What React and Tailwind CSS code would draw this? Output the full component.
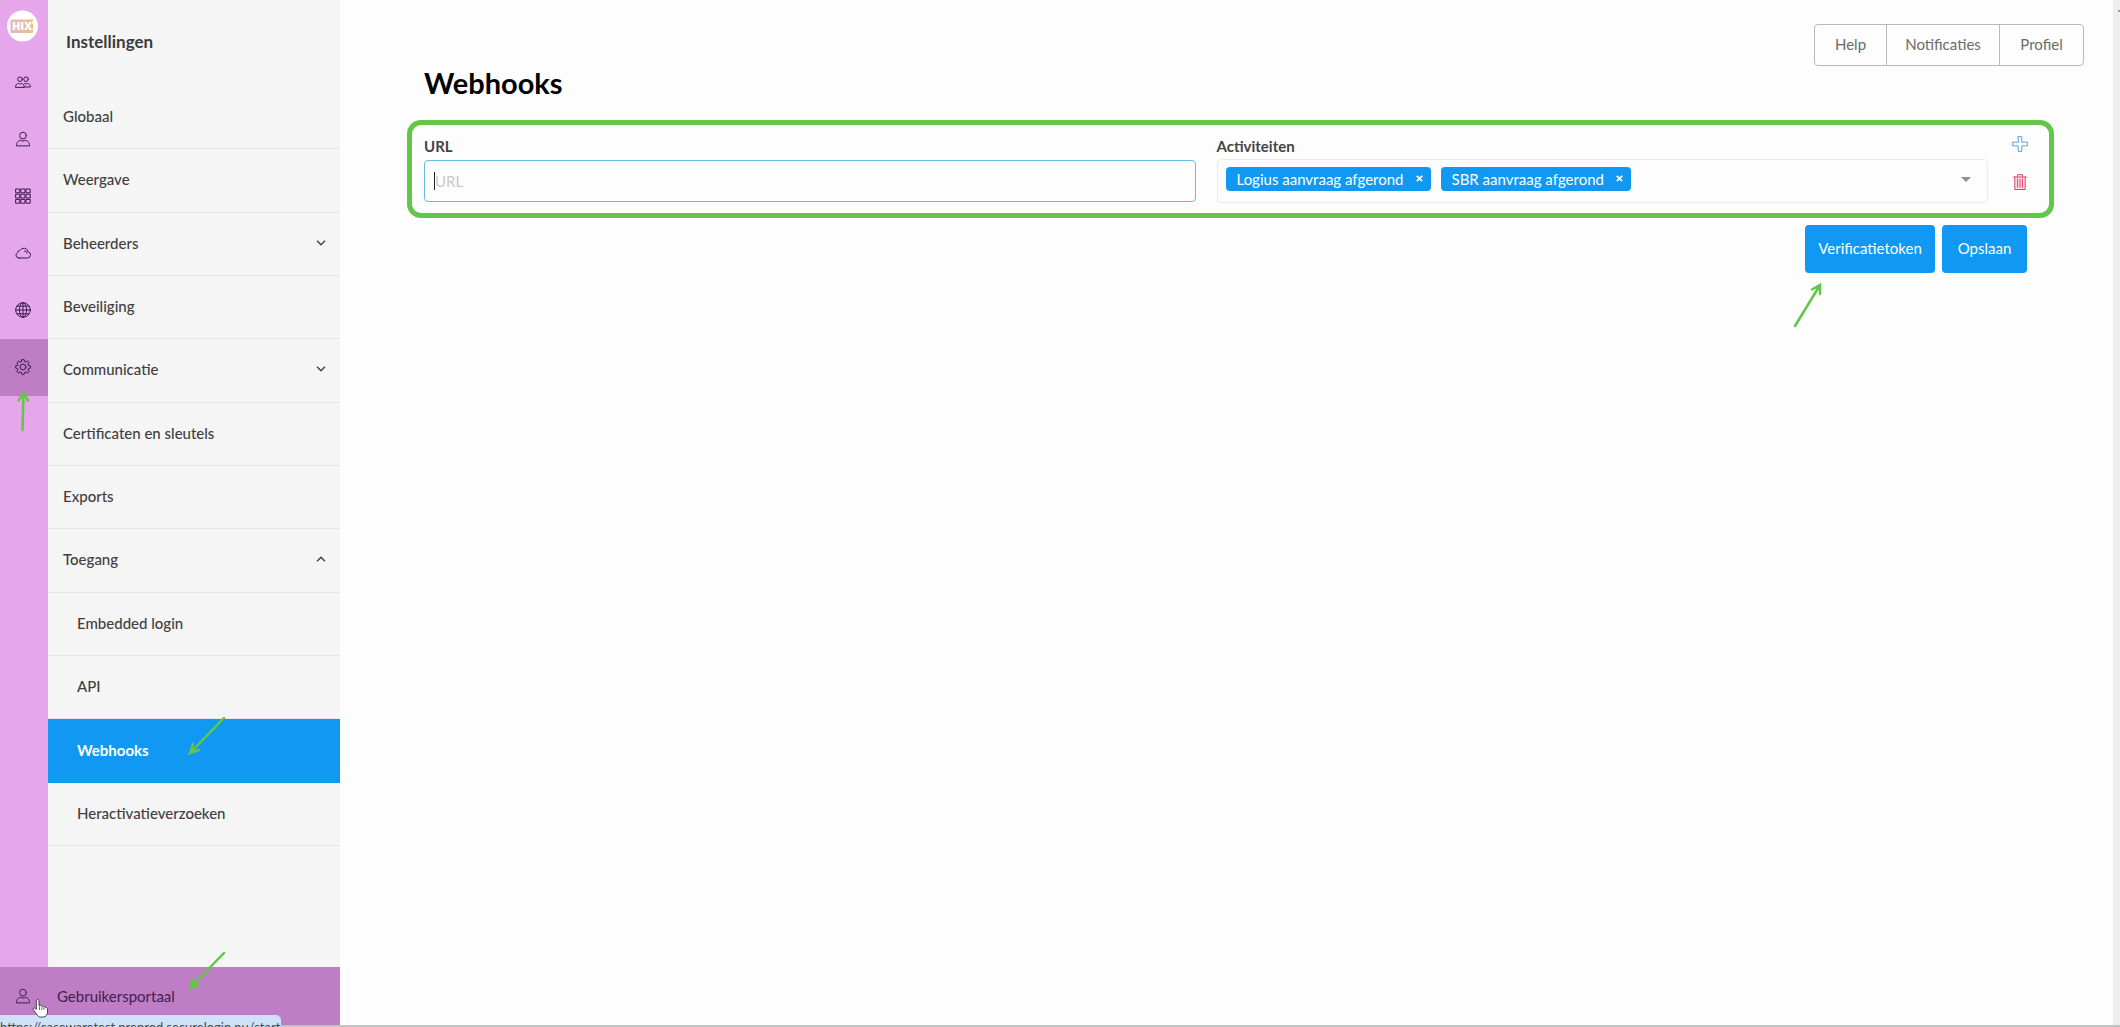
import { useState } from "react";

const menuItems = [
  { label: "Globaal" },
  { label: "Weergave" },
  { label: "Beheerders", toggle: "down" },
  { label: "Beveiliging" },
  { label: "Communicatie", toggle: "down" },
  { label: "Certificaten en sleutels" },
  { label: "Exports" },
  { label: "Toegang", toggle: "up" },
  { label: "Embedded login", sub: true },
  { label: "API", sub: true },
  { label: "Webhooks", sub: true, active: true },
  { label: "Heractivatieverzoeken", sub: true },
];

// All rail icons share a 16px box with thin strokes
function Icon({ children, className = "" }) {
  return (
    <svg
      className={`w-4 h-4 shrink-0 ${className}`}
      viewBox="0 0 16 16"
      fill="none"
      stroke="currentColor"
      strokeWidth="1"
      strokeLinejoin="round"
      strokeLinecap="round"
      aria-hidden="true"
    >
      {children}
    </svg>
  );
}

function UsersIcon() {
  return (
    <Icon>
      <circle cx="5" cy="5.2" r="2.3" />
      <circle cx="11" cy="5.2" r="2.3" />
      <path d="M.6 13c0-2.6 1.2-3.3 3-3.5.8.6 2.1.6 2.9 0 1.7.2 2.7 1 2.7 3.5z" />
      <path d="M9.6 9.5c.9.5 2 .5 2.8 0 1.9.2 3 1 3 3.5H9.2" />
    </Icon>
  );
}

function UserIcon() {
  return (
    <Icon>
      <circle cx="8" cy="4.6" r="3.4" />
      <path d="M1.5 14.5c0-3.6 1.8-4.7 4.3-5.1 1.3.8 3.1.8 4.4 0 2.5.4 4.3 1.5 4.3 5.1z" />
    </Icon>
  );
}

function GridIcon() {
  const cells = [1, 6.2, 11.4];
  return (
    <Icon>
      {cells.map((y) =>
        cells.map((x) => <rect key={`${x}-${y}`} x={x} y={y} width="3.8" height="3.8" />)
      )}
    </Icon>
  );
}

function CloudIcon() {
  return (
    <Icon>
      <path d="M4 13h8.300a3.100 3.100 0 0 0 .9-6.100A4.500 4.500 0 0 0 4.800 5.600 2.200 2.200 0 0 0 2.500 7.900 2.700 2.700 0 0 0 4 13z" />
      <path d="M9.500 6.200c1.600-.3 2.500.7 2.500 2" />
    </Icon>
  );
}

function GlobeIcon() {
  return (
    <Icon>
      <circle cx="8" cy="8" r="7.3" />
      <ellipse cx="8" cy="8" rx="3.6" ry="7.3" />
      <path d="M.7 8h14.6M8 .7v14.6M1.9 4.2h12.2M1.9 11.8h12.2" />
    </Icon>
  );
}

function GearIcon() {
  return (
    <Icon>
      <path d="M6.8.7h2.400l.4 1.900 1.200.5 1.600-1.100 1.700 1.700-1.100 1.600.5 1.200 1.800.3v2.400l-1.800.4-.5 1.200 1.100 1.600-1.700 1.700-1.600-1.100-1.200.5-.4 1.800H6.800l-.4-1.800-1.200-.5-1.600 1.100-1.700-1.700L3 10.800l-.5-1.200-1.800-.4V6.800l1.800-.3L3 5.300 1.900 3.700 3.600 2l1.600 1.100 1.200-.5z" />
      <circle cx="8" cy="8" r="2.9" />
    </Icon>
  );
}

function Chevron({ up }) {
  return (
    <svg className="w-[10px] h-[6px]" viewBox="0 0 10 6" fill="none" stroke="#444" strokeWidth="1.5" aria-hidden="true">
      <path d={up ? "M1 5.3l4-4 4 4" : "M1 .7l4 4 4-4"} />
    </svg>
  );
}

function Logo() {
  return (
    <svg className="w-8 h-8" viewBox="0 0 32 32" role="img" aria-label="HIX">
      <defs>
        <linearGradient id="hix" x1="0" x2="1">
          <stop offset="0" stopColor="#e6b5c4" />
          <stop offset="1" stopColor="#e8c48c" />
        </linearGradient>
      </defs>
      <circle cx="15.5" cy="16" r="15.5" fill="#fff" />
      <path d="M4.500 9.500h22l-1.500 3 1.500 3.500-1 3.500 1 2-1 1.500H3.500V10.500z" fill="url(#hix)" />
      <text x="15" y="20" textAnchor="middle" fontFamily="Open Sans, sans-serif" fontWeight="800" fontSize="11" fill="#fff">
        HIX
      </text>
    </svg>
  );
}

const railItems = [
  { name: "Groepen", icon: UsersIcon },
  { name: "Gebruikers", icon: UserIcon },
  { name: "Applicaties", icon: GridIcon },
  { name: "Cloud", icon: CloudIcon },
  { name: "Domeinen", icon: GlobeIcon },
  { name: "Instellingen", icon: GearIcon, active: true },
];

function Rail() {
  return (
    <nav className="w-12 shrink-0 bg-[#e6a6ec] text-[#3d1a4a]" aria-label="Hoofdmenu">
      <a href="#" className="flex h-[54px] pl-[7px] pt-[10px]">
        <Logo />
      </a>
      {railItems.map(({ name, icon: ItemIcon, active }) => (
        <a
          key={name}
          href="#"
          aria-label={name}
          className={`flex items-center h-[57px] pl-[15px] pb-[2px] ${active ? "bg-[#be7dc5]" : ""}`}
        >
          <ItemIcon />
        </a>
      ))}
    </nav>
  );
}

function SettingsMenu() {
  return (
    <nav className="flex-1 bg-[#f5f5f5]" aria-label="Instellingen">
      <h2 className="h-[86px] pl-[18px] pt-[30px] text-[17px] leading-6 font-bold text-[#3c3c3c]">Instellingen</h2>
      <ul className="grid auto-rows-fr h-[760px]">
        {menuItems.map((item) => (
          <li key={item.label} className={item.active ? "bg-[#1098f2]" : "border-b border-[#e6e6e6]"}>
            <a
              href="#"
              className={`flex items-center justify-between h-full pr-[14px] pb-[2px] text-[15px] leading-5 ${
                item.sub ? "pl-[29px]" : "pl-[15px]"
              } ${item.active ? "text-white font-bold" : "text-[#3f3f3f] font-medium"}`}
            >
              {item.label}
              {item.toggle && <Chevron up={item.toggle === "up"} />}
            </a>
          </li>
        ))}
      </ul>
    </nav>
  );
}

function Arrow({ className, d, box }) {
  return (
    <svg
      className={`absolute pointer-events-none ${className}`}
      viewBox={box}
      fill="none"
      stroke="#62c646"
      strokeWidth="2.5"
      strokeLinecap="round"
      aria-hidden="true"
    >
      <path d={d} />
    </svg>
  );
}

function Chip({ label, onRemove }) {
  return (
    <span className="flex items-center h-[24px] pl-[11px] pb-px rounded-[4px] bg-[#1098f2] text-white text-[15px] leading-5">
      {label}
      <button type="button" onClick={onRemove} aria-label={`Verwijder ${label}`} className="flex ml-[12px] mr-[8px]">
        <svg className="w-[7px] h-[7px]" viewBox="0 0 7 7" stroke="#fff" strokeWidth="1.7" aria-hidden="true">
          <path d="M.8.8l5.400 5.400M6.200.8L.8 6.200" />
        </svg>
      </button>
    </span>
  );
}

function WebhookRow() {
  const [activities, setActivities] = useState(["Logius aanvraag afgerond", "SBR aanvraag afgerond"]);

  return (
    <section className="flex h-[98px] mt-[20px] pl-[12px] pr-[21px] pt-[11px] border-[5px] border-[#62c646] rounded-[14px]">
      <div className="flex-1 relative">
        <label htmlFor="url" className="block h-[24px] text-[15px] leading-5 font-bold text-[#444]">
          URL
        </label>
        <input
          id="url"
          type="text"
          placeholder="URL"
          className="block w-full h-[42px] px-[10px] border border-[#63bfe0] rounded-[4px] bg-transparent text-[15px] leading-5 placeholder:text-[#c9c9c9] outline-none"
        />
        {/* text cursor */}
        <span className="absolute left-[10px] top-[36px] w-px h-[18px] bg-[#222]" />
      </div>
      <div className="flex-1 ml-[21px]">
        <label htmlFor="activities" className="block h-[23px] text-[15px] leading-5 font-bold text-[#444]">
          Activiteiten
        </label>
        <div className="flex items-start gap-[10px] h-[44px] pl-[8px] pt-[7px] pr-[16px] border border-[#ebebeb] rounded-[4px]">
          {activities.map((a) => (
            <Chip key={a} label={a} onRemove={() => setActivities(activities.filter((b) => b !== a))} />
          ))}
          <input id="activities" type="text" role="combobox" aria-expanded="false" className="flex-1 min-w-0 h-[23px] outline-none" />
          <button type="button" aria-label="Toon opties" className="flex pt-[10px]">
            <svg className="w-[10px] h-[5px]" viewBox="0 0 10 5" fill="#909090" aria-hidden="true">
              <path d="M0 0h10L5 5z" />
            </svg>
          </button>
        </div>
      </div>
      <div className="flex flex-col gap-[22px] ml-[24px]">
        <button type="button" aria-label="Toevoegen" className="flex text-[#5f9fdf]">
          <Icon>
            <path d="M6.200.6h3.600v5.600h5.600v3.600H9.800v5.600H6.200V9.800H.6V6.200h5.600z" />
          </Icon>
        </button>
        <button type="button" aria-label="Verwijderen" className="flex text-[#e0446a]">
          <Icon>
            <path d="M2.800 3v12.500h10.400V3" fill="#fbdde5" />
            <path d="M1.500 3h13M5.500 3V.7h5V3" />
            <path d="M5.600 5.200v8M8 5.200v8M10.400 5.200v8" />
          </Icon>
        </button>
      </div>
    </section>
  );
}

function TopButtons() {
  return (
    <div className="flex self-end h-[42px] mr-[29px] border border-[#b9b9b9] rounded-[4px] divide-x divide-[#b9b9b9] text-[15px] leading-5 text-[#6b6b6b]">
      <button type="button" className="w-[72px] pb-[2px]">Help</button>
      <button type="button" className="w-[113px] pb-[2px]">Notificaties</button>
      <button type="button" className="w-[83px] pb-[2px]">Profiel</button>
    </div>
  );
}

export default function App() {
  return (
    <div className="relative flex flex-col min-h-screen bg-[#fdfdfd] font-['Lato',sans-serif]">
      <div className="flex flex-1">
        <aside className="relative flex flex-col w-[340px] shrink-0">
          <div className="flex flex-1">
            <Rail />
            <SettingsMenu />
          </div>
          <a href="#" className="flex items-center h-[58px] pl-[15px] pb-px bg-[#be7dc5] text-[#43204f] text-[15px] leading-5">
            <UserIcon />
            <span className="pl-[26px]">Gebruikersportaal</span>
          </a>
          <Arrow className="left-[12px] top-[388px] w-[22px] h-[46px]" box="0 0 22 46" d="M10.500 42L11.500 5M6.500 12.500L11.500 5l4.500 7.500" />
          <Arrow className="left-[185px] top-[714px] w-[44px] h-[44px]" box="0 0 44 44" d="M39 4L5 39M8 30L5 39l9-3" />
          <Arrow className="left-[185px] top-[949px] w-[44px] h-[44px]" box="0 0 44 44" d="M39 4L5 39M8 30L5 39l9-3" />
        </aside>

        <main className="relative flex-1 flex flex-col pt-[24px]">
          <TopButtons />
          <div className="pl-[67px] pr-[59px]">
            <h1 className="pl-[17px] text-[29px] leading-[34px] font-bold text-black">Webhooks</h1>
            <WebhookRow />
            <div className="flex justify-end gap-[7px] mt-[7px] mr-[27px] text-white text-[15px] leading-5">
              <button type="button" className="w-[130px] h-[48px] pb-[2px] rounded-[4px] bg-[#1098f2]">
                Verificatietoken
              </button>
              <button type="button" className="w-[85px] h-[48px] pb-[2px] rounded-[4px] bg-[#1098f2]">
                Opslaan
              </button>
            </div>
          </div>
          <Arrow className="right-[288px] top-[280px] w-[36px] h-[50px]" box="0 0 36 50" d="M6 46L31 5M23 9.500l8-4.500v9" />
        </main>

        {/* scrollbar track */}
        <div className="w-[7px] shrink-0 pl-[5px] pt-[10px] bg-[#eeeeee]">
          <div className="w-[2px] h-[2px] bg-[#999]" />
        </div>
      </div>
      <div className="h-[2px] bg-[#c2c4c4]" />

      {/* browser status bubble */}
      <div className="absolute left-0 bottom-0 w-[281px] h-[12px] pt-[2px] overflow-hidden rounded-tr-[5px] bg-[#cfe1f8] text-[13px] leading-5 text-[#4a4a4a] whitespace-nowrap">
        https://casewaretest.preprod.securelogin.nu/start
      </div>
      <svg className="absolute left-[32px] bottom-[9px] w-[17px] h-[20px]" viewBox="0 0 17 20" aria-hidden="true">
        <path
          d="M5 1.500c1.200-.6 2 .2 2 1.200V8l.8-.6c.9-.4 1.700 0 1.900.8.900-.5 1.800-.1 2 .8.900-.4 1.800 0 2 .7.900-.2 1.800.3 1.800 1.300v3c0 2.600-1.700 5-4.200 5H8.500c-1.600 0-2.500-.8-3.300-2L1.300 11.700c-.7-1.200.8-2.300 1.900-1.400L4.300 11.500V2.700c0-.5.200-1 .7-1.200z"
          fill="#fff"
          stroke="#444"
          strokeWidth="1"
        />
        <path d="M7.500 8.500v3.500M9.800 9v3M12 9.700v2.300" stroke="#444" strokeWidth=".8" />
      </svg>
    </div>
  );
}
